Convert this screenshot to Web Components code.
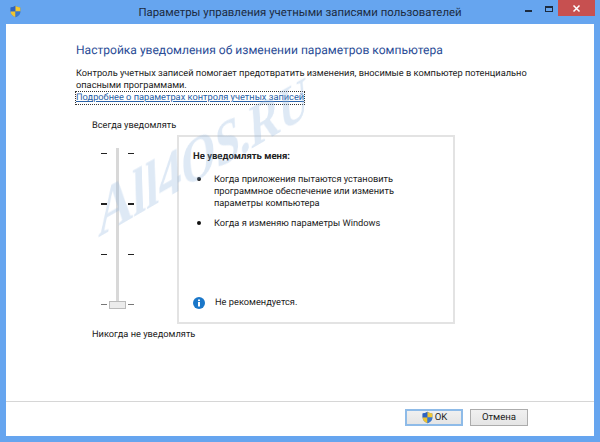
<!DOCTYPE html>
<html>
<head>
<meta charset="utf-8">
<style>
  html, body { margin: 0; padding: 0; height: 100%; }
</style>
</head>
<body>
<uac-window>
  <uac-panel></uac-panel>
</uac-window>
<script>
const SHIELD = `
  <path d="M8 1 C6 2.5 4 3 2 3 L2 8 C2 11.5 4.5 14 8 15 C11.5 14 14 11.5 14 8 L14 3 C12 3 10 2.5 8 1 Z" fill="#3f74c4"/>
  <path d="M8 1 C6 2.5 4 3 2 3 L2 8 L8 8 Z" fill="#2f63c0"/>
  <path d="M8 1 C10 2.5 12 3 14 3 L14 8 L8 8 Z" fill="#f2c832"/>
  <path d="M2 8 C2 11.5 4.5 14 8 15 L8 8 Z" fill="#f0c52f"/>
  <path d="M14 8 C14 11.5 11.5 14 8 15 L8 8 Z" fill="#3a78cc"/>`;

class UacWindow extends HTMLElement {
  connectedCallback() {
    this.attachShadow({ mode: 'open' });
    this.shadowRoot.innerHTML = `
      <style>
        :host {
          display: flex;
          flex-direction: column;
          width: 600px;
          height: 442px;
          box-sizing: border-box;
          background: #66a5ef;
          padding: 0 6px 6px;
          font-family: Roboto, sans-serif;
          text-rendering: geometricPrecision;
          color: #222;
        }
        .title {
          display: grid;
          grid-template-columns: 1fr auto 1fr;
          height: 24px;
          flex: none;
          align-items: center;
        }
        .title svg.app { margin-left: 3px; margin-top: -1px; display: block; }
        .title span {
          font-size: 11.4px;
          color: #1c2b3f;
        }
        .caps { display: flex; align-items: flex-start; align-self: start; justify-content: flex-end; margin-right: -1px; }
        .cap { height: 18px; display: flex; align-items: center; justify-content: center; }
        .min { width: 25px; }
        .max { width: 18px; }
        .close { width: 37px; height: 16px; background: #c75050; padding-top: 1px; box-sizing: border-box; }
        .client {
          flex: 1;
          background: #fff;
          display: flex;
          flex-direction: column;
          min-height: 0;
        }
      </style>
      <div class="title">
        <svg class="app" width="13" height="13" viewBox="0 0 16 16">${SHIELD}</svg>
        <span>Параметры управления учетными записями пользователей</span>
        <div class="caps">
          <div class="cap min"><svg width="8" height="8"><rect x="1" y="5" width="7" height="2" fill="#1c2b3f"/></svg></div>
          <div class="cap max"><svg width="10" height="8"><rect x="1.5" y="1.5" width="7" height="5" fill="none" stroke="#1c2b3f"/><rect x="1" y="1" width="8" height="2" fill="#1c2b3f"/></svg></div>
          <div class="cap close"><svg width="9" height="9"><path d="M1.5 1.5 L7.5 7.5 M7.5 1.5 L1.5 7.5" stroke="#fff" stroke-width="1.5"/></svg></div>
        </div>
      </div>
      <div class="client"><slot></slot></div>
    `;
  }
}

class UacPanel extends HTMLElement {
  connectedCallback() {
    this.attachShadow({ mode: 'open' });
    this.shadowRoot.innerHTML = `
      <style>
        :host { display: flex; flex-direction: column; flex: 1; min-height: 0; position: relative; overflow: hidden; }
        .body { flex: 1; padding: 17px 0 0 70px; font-size: 9.25px; line-height: 12px; }
        h1 {
          margin: 0 0 9px;
          font-weight: 400;
          font-size: 12.05px;
          line-height: 18px;
          color: #2a4c96;
        }
        p { margin: 0; width: 480px; color: #222; }
        a { color: #2a62a8; text-decoration: underline; outline: 1px dotted #333; outline-offset: 0; display: inline-block; }
        .main { display: flex; margin-top: 16px; }
        .left { width: 101px; flex: none; }
        .edge { padding-left: 16px; white-space: nowrap; }
        .edge.bottom { margin-top: 21px; }
        .info {
          width: 278px;
          height: 189px;
          box-sizing: border-box;
          margin-top: 15px;
          border: 2px solid #e3e3e3;
          padding: 14px 20px 0 14px;
          display: flex;
          flex-direction: column;
        }
        .info b { font-weight: 700; font-size: 9.5px; }
        ul { list-style: none; margin: 11px 0 0; padding: 0; }
        li { display: flex; margin-bottom: 8px; }
        li i { width: 4px; height: 4px; border-radius: 50%; background: #111; margin: 3px 13px 0 4px; flex: none; }
        .note { margin-top: auto; margin-bottom: 13px; display: flex; align-items: center; gap: 10px; }
        .foot {
          flex: none;
          height: 35px;
          box-sizing: border-box;
          border-top: 1px solid #d6d6d6;
          display: flex;
          align-items: flex-start;
          justify-content: flex-end;
          padding: 7px 66px 0 0;
          gap: 7px;
          font-size: 9.6px;
        }
        .btn {
          width: 58px;
          height: 17px;
          box-sizing: border-box;
          border: 1px solid #acacac;
          background: linear-gradient(#f0f0f0, #e5e5e5);
          display: flex;
          align-items: center;
          justify-content: center;
          gap: 1px;
        }
        .btn.def { border: 2px solid #8ebbe8; }
        .mark {
          position: absolute;
          left: 92px;
          top: 163px;
          font: 700 60px/60px "Liberation Serif", serif;
          color: #8fb4de;
          opacity: .3;
          filter: blur(.6px);
          transform: rotate(-30deg) perspective(700px) rotateY(18deg) skewX(-30deg);
          transform-origin: 0 46px;
          white-space: nowrap;
          pointer-events: none;
        }
      </style>
      <div class="body">
        <h1>Настройка уведомления об изменении параметров компьютера</h1>
        <p>Контроль учетных записей помогает предотвратить изменения, вносимые в компьютер потенциально опасными программами.</p>
        <a href="#">Подробнее о параметрах контроля учетных записей</a>
        <div class="main">
          <div class="left">
            <div class="edge">Всегда уведомлять</div>
            <uac-slider></uac-slider>
            <div class="edge bottom">Никогда не уведомлять</div>
          </div>
          <div class="info">
            <b>Не уведомлять меня:</b>
            <ul>
              <li><i></i><span>Когда приложения пытаются установить программное обеспечение или изменить параметры компьютера</span></li>
              <li><i></i><span>Когда я изменяю параметры Windows</span></li>
            </ul>
            <div class="note">
              <svg width="12" height="12" viewBox="0 0 12 12"><circle cx="6" cy="6" r="6" fill="#1a77c9"/><rect x="5" y="5" width="2" height="4.5" fill="#fff"/><rect x="5" y="2.5" width="2" height="1.6" fill="#fff"/></svg>
              <span>Не рекомендуется.</span>
            </div>
          </div>
        </div>
      </div>
      <div class="foot">
        <div class="btn def"><svg width="13" height="13" viewBox="0 0 16 16">${SHIELD}</svg><span>OK</span></div>
        <div class="btn">Отмена</div>
      </div>
      <div class="mark">All4OS.RU</div>
    `;
  }
}

class UacSlider extends HTMLElement {
  connectedCallback() {
    this.attachShadow({ mode: 'open' });
    this.shadowRoot.innerHTML = `
      <style>
        :host {
          display: grid;
          grid-template-columns: 6px 3px 6px;
          column-gap: 9px;
          position: relative;
          width: 33px;
          height: 160px;
          margin: 16px 0 0 25px;
        }
        .ticks { display: flex; flex-direction: column; justify-content: space-between; padding: 5px 0 3px; }
        .ticks i { display: block; height: 1px; background: #222; }
        .ticks i.strong { height: 2px; }
        .ticks i.last { background: #777; }
        .track { background: #d8d8d8; }
        .thumb { position: absolute; left: 8px; top: 153px; width: 17px; height: 8px; box-sizing: border-box; border: 1px solid #bbb; background: #ececec; }
      </style>
      <div class="ticks"><i></i><i class="strong"></i><i></i><i class="last"></i></div>
      <div class="track"></div>
      <div class="ticks"><i></i><i class="strong"></i><i></i><i class="last"></i></div>
      <div class="thumb"></div>
    `;
  }
}

customElements.define('uac-window', UacWindow);
customElements.define('uac-panel', UacPanel);
customElements.define('uac-slider', UacSlider);
</script>
</body>
</html>
